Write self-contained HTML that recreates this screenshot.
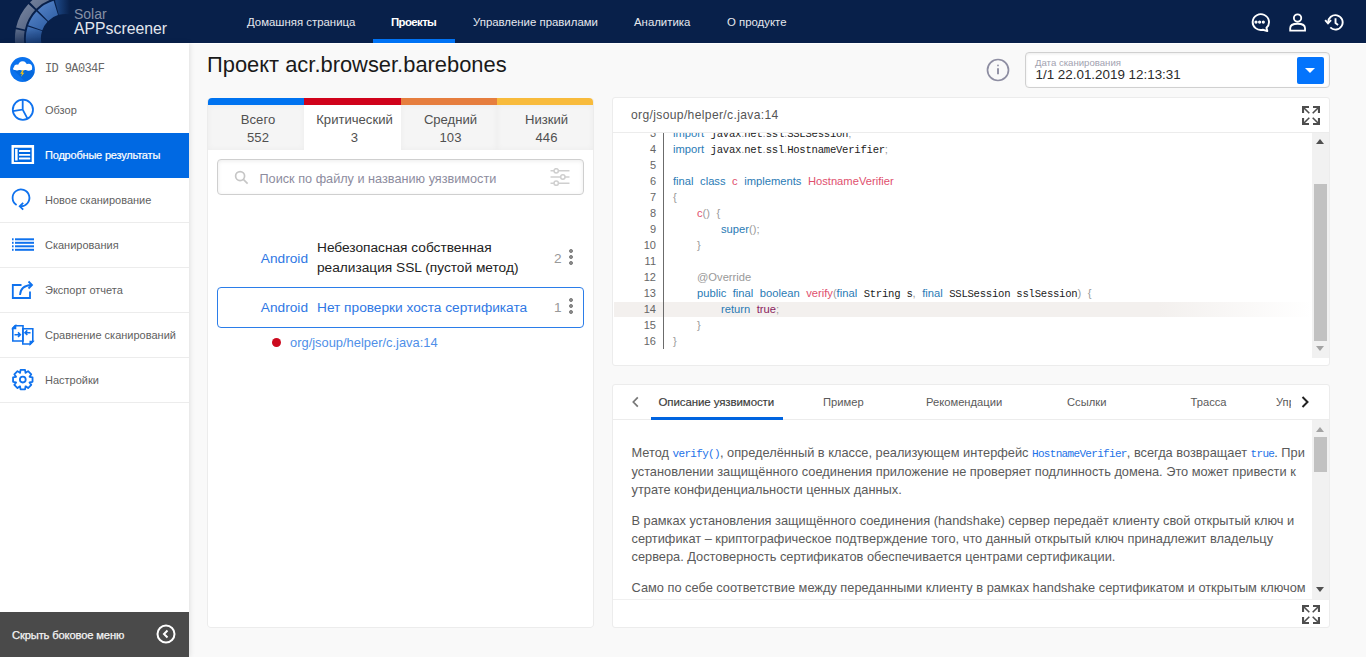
<!DOCTYPE html>
<html><head><meta charset="utf-8">
<style>
*{margin:0;padding:0;box-sizing:border-box}
html,body{width:1366px;height:657px;overflow:hidden;background:#f9f9f9;font-family:"Liberation Sans",sans-serif;position:relative}
.abs{position:absolute}
#hdr{left:0;top:0;width:1366px;height:43px;background:#08204a}
#hdr .nav{position:absolute;top:14px;font-size:11.4px;color:#e6e8ee;white-space:nowrap;line-height:16px}
#sb{left:0;top:43px;width:189px;height:614px;background:#fff;box-shadow:1px 0 5px rgba(0,0,0,.10)}
.si{position:absolute;left:0;width:189px;height:45px;border-bottom:1px solid #ececec}
.si .t{position:absolute;left:45px;top:0;line-height:44px;font-size:11px;color:#5f5f5f;white-space:nowrap}
.si svg{position:absolute}
.mono{font-family:"Liberation Mono",monospace}
.panel{background:#fff;border:1px solid #ececec;border-radius:3px}

.ttl{text-align:center;font-size:13.1px;line-height:18px;color:#505050}
.tab{box-shadow:inset 0 0 6px rgba(0,0,0,.04)}
.li{font-size:13.7px;line-height:20px;white-space:nowrap}
.dots{width:4px;height:18px;background:radial-gradient(circle,#888 1.8px,transparent 2.2px) 0 0/4px 6px repeat-y}

.cl{position:relative;height:16px;line-height:16px;white-space:nowrap;font-size:11.2px;word-spacing:3.4px}
.cl.hl{background:linear-gradient(90deg,#f3f0ee 0,#f3f0ee 78%,rgba(243,240,238,0) 100%) 0 1px/100% 16px no-repeat}
.ln{position:absolute;right:656px;width:40px;text-align:right;color:#666;font-size:11px;word-spacing:0}
.ct{position:absolute;left:59px}
.k{color:#2a7bb5}.f{color:#e0506e}.p{color:#9a9a9a}.an{color:#999}.tr{color:#8b1d5e}
.m{font-family:"Liberation Mono",monospace;font-size:10.6px;letter-spacing:-.25px;color:#1b1b1b;word-spacing:0}
.i1{display:inline-block;width:24px}.i2{display:inline-block;width:48px}
.tb{top:7.5px;font-size:11.2px;line-height:16px;color:#5a5a5a;white-space:nowrap}
.desc{font-size:12.8px;line-height:18px;color:#5a5a5a;white-space:nowrap}
.desc p{margin-bottom:13px}
.bm{font-family:"Liberation Mono",monospace;font-size:11px;color:#1d72e8;letter-spacing:-.68px}
</style></head>
<body>
<!-- HEADER -->
<div id="hdr" class="abs">
  <svg class="abs" style="left:0;top:0" width="72" height="43" viewBox="0 0 72 43">
  <defs>
    <linearGradient id="go" gradientUnits="userSpaceOnUse" x1="15" y1="0" x2="55" y2="43"><stop offset="0" stop-color="#7f8ca5"/><stop offset="1" stop-color="#34466a"/></linearGradient>
    <linearGradient id="gm" gradientUnits="userSpaceOnUse" x1="25" y1="5" x2="55" y2="43"><stop offset="0" stop-color="#5e8cd0"/><stop offset="1" stop-color="#1a4a90"/></linearGradient>
    <linearGradient id="fo" gradientUnits="userSpaceOnUse" x1="55" y1="0" x2="70" y2="0"><stop offset="0" stop-color="#4a5a78"/><stop offset="1" stop-color="#08204a"/></linearGradient>
    <linearGradient id="fm" gradientUnits="userSpaceOnUse" x1="55" y1="0" x2="70" y2="0"><stop offset="0" stop-color="#1e4a8a"/><stop offset="1" stop-color="#08204a"/></linearGradient>
    <linearGradient id="gb" gradientUnits="userSpaceOnUse" x1="0" y1="28" x2="0" y2="43"><stop offset="0" stop-color="#fff" stop-opacity="1"/><stop offset="1" stop-color="#fff" stop-opacity=".45"/></linearGradient>
    <mask id="mb"><rect x="0" y="0" width="72" height="43" fill="url(#gb)"/></mask>
  </defs>
  <g mask="url(#mb)">
  <path d="M15.76 29.32 A50 50 0 0 0 24.04 66.68 L31.41 61.52 A41 41 0 0 1 24.62 30.88 Z" fill="url(#go)"/>
  <path d="M27.70 26.60 A39 39 0 0 0 33.05 60.37 L45.34 51.77 A24 24 0 0 1 42.05 30.98 Z" fill="url(#gm)"/>
  </g>
  <path d="M28.43 3.90 A50 50 0 0 0 16.09 27.60 L24.90 29.48 A41 41 0 0 1 35.01 10.04 Z" fill="url(#go)"/>
  <path d="M51.22 -10.06 A50 50 0 0 0 29.95 2.34 L36.26 8.76 A41 41 0 0 1 53.70 -1.41 Z" fill="url(#go)"/>
  <path d="M90.00 -5.30 A50 50 0 0 0 52.90 -10.51 L55.08 -1.78 A41 41 0 0 1 85.50 2.49 Z" fill="url(#fo)"/>
  <path d="M36.48 11.40 A39 39 0 0 0 28.12 25.30 L42.31 30.19 A24 24 0 0 1 47.45 21.63 Z" fill="url(#gm)"/>
  <path d="M53.60 0.70 A39 39 0 0 0 37.66 10.18 L48.18 20.88 A24 24 0 0 1 57.98 15.05 Z" fill="url(#gm)"/>
  <path d="M90.07 8.12 A39 39 0 0 0 54.91 0.33 L58.79 14.82 A24 24 0 0 1 80.43 19.61 Z" fill="url(#fm)"/>
</svg>
  <div class="abs" style="left:74px;top:5px;font-size:14px;color:#8690a6;line-height:18px">Solar</div>
  <div class="abs" style="left:74px;top:19px;font-size:15.8px;color:#e2e6ee;line-height:20px">APPscreener</div>
  <div class="nav" style="left:247px">Домашняя страница</div>
  <div class="nav" style="left:391px;font-weight:bold;color:#fff;letter-spacing:-.6px">Проекты</div>
  <div class="abs" style="left:373px;top:39px;width:82px;height:4px;background:#0073f5"></div>
  <div class="nav" style="left:473px">Управление правилами</div>
  <div class="nav" style="left:634px">Аналитика</div>
  <div class="nav" style="left:727px">О продукте</div>
</div>
<div class="abs" style="left:0;top:43px;width:1366px;height:1px;background:#fff"></div>

<!-- SIDEBAR -->
<div id="sb" class="abs">
  <!-- ID -->
  <div class="si" style="top:0;border-bottom:none">
    <svg style="left:10px;top:14px" width="25" height="25" viewBox="0 0 25 25">
      <defs><clipPath id="cc"><circle cx="12.5" cy="12.5" r="12.4"/></clipPath></defs>
      <circle cx="12.5" cy="12.5" r="12.4" fill="#0a72ee"/>
      <path d="M3.5 13 L22 13 L34 25 L15.5 25 Z" fill="#0060d0" opacity=".55" clip-path="url(#cc)"/>
      <g fill="#fff">
        <circle cx="7" cy="10.6" r="3"/><circle cx="12.6" cy="8.9" r="4.6"/><circle cx="18.6" cy="10.2" r="3.5"/>
        <rect x="3.1" y="10.3" width="19" height="2.8" rx="1.3"/>
      </g>
      <path d="M12.6 13.1 L10.2 16.7 L12.1 16.7 L10.8 20 L14.4 15.7 L12.5 15.7 L13.8 13.1 Z" fill="#f6c412"/>
    </svg>
    <div class="t mono" style="line-height:52px;font-size:12px;color:#666;letter-spacing:-.62px">ID 9A034F</div>
  </div>
  <!-- Obzor -->
  <div class="si" style="top:45px;border-bottom:none">
    <svg style="left:11px;top:98px;top:10px" width="24" height="24" viewBox="0 0 24 24" fill="none" stroke="#0f72ee" stroke-width="1.8">
      <circle cx="11.9" cy="11.8" r="10.1"/>
      <path d="M11.7 1.7 V11.6 L1.8 13.1 M11.7 11.6 L16.6 20.8"/>
    </svg>
    <div class="t">Обзор</div>
  </div>
  <!-- active -->
  <div class="si" style="top:90px;height:45px;background:#0069e3;border-bottom:none">
    <svg style="left:11px;top:12px" width="24" height="20" viewBox="0 0 24 20" fill="#fff">
      <path fill-rule="evenodd" d="M0.5 0 H23.1 V19 H0.5 Z M2.9 2.7 V17 H20.7 V2.7 Z"/>
      <rect x="4.1" y="3.9" width="2.5" height="11.6"/>
      <rect x="8" y="5.1" width="11.2" height="1.8" rx=".5"/><rect x="8" y="8.9" width="11.2" height="1.8" rx=".5"/><rect x="8" y="12.6" width="11.2" height="1.8" rx=".5"/>
    </svg>
    <div class="t" style="color:#fff;font-size:11px;letter-spacing:-.2px;-webkit-text-stroke:.2px #fff">Подробные результаты</div>
  </div>
  <div class="si" style="top:135px;height:45px">
    <svg style="left:11px;top:9px" width="24" height="24" viewBox="0 0 24 24" fill="none" stroke="#0f72ee" stroke-width="1.8">
      <path d="M5.6 18 A8.4 8.4 0 1 1 9.2 19.2"/>
      <path d="M12.2 15.9 L8.7 19.3 L12.2 22.7"/>
    </svg>
    <div class="t">Новое сканирование</div>
  </div>
  <div class="si" style="top:180px;height:45px">
    <svg style="left:11px;top:15px" width="24" height="14" viewBox="0 0 24 14" fill="#0f72ee">
      <rect x="1" y="0.3" width="1.6" height="2"/><rect x="4" y="0.3" width="19" height="2"/>
      <rect x="1" y="3.8" width="1.6" height="2"/><rect x="4" y="3.8" width="19" height="2"/>
      <rect x="1" y="7.3" width="1.6" height="2"/><rect x="4" y="7.3" width="19" height="2"/>
      <rect x="1" y="10.8" width="1.6" height="2"/><rect x="4" y="10.8" width="19" height="2"/>
    </svg>
    <div class="t">Сканирования</div>
  </div>
  <div class="si" style="top:225px;height:45px">
    <svg style="left:11px;top:11px" width="24" height="22" viewBox="0 0 24 22" fill="none" stroke="#0f72ee" stroke-width="1.8">
      <path d="M10.5 6 H1.8 V19 H19 V12.5"/>
      <path d="M9 16 Q9.5 6.5 20.5 6"/>
      <path d="M17.5 2.5 L21 6 L17.5 9.5"/>
    </svg>
    <div class="t">Экспорт отчета</div>
  </div>
  <div class="si" style="top:270px;height:45px">
    <svg style="left:11px;top:11px" width="24" height="24" viewBox="0 0 24 24" fill="none" stroke="#0f72ee" stroke-width="1.6">
      <path d="M4 1.8 H12 V17 H1.8 V4 Z" fill="#0f72ee" fill-opacity="0" />
      <path d="M1.8 4.5 L4.5 1.8 V4.5 Z" fill="#0f72ee"/>
      <path d="M11.8 4.8 H21.8 V17.5 L19.3 20 H11.8 Z"/>
      <path d="M21.8 17.5 H19.3 V20 Z" fill="#0f72ee"/>
      <path d="M3.5 10.7 H9.3 M7 8.4 L9.3 10.7 L7 13"/>
      <path d="M19.5 8.7 H14 M16.3 6.4 L14 8.7 L16.3 11"/>
    </svg>
    <div class="t">Сравнение сканирований</div>
  </div>
  <div class="si" style="top:315px;height:45px">
    <svg style="left:11px;top:10px" width="24" height="24" viewBox="0 0 24 24" fill="none" stroke="#0f72ee" stroke-width="1.8" stroke-linejoin="round">
      <path d="M9.07 4.83 L9.55 1.86 L14.05 1.86 L14.53 4.83 L14.65 4.88 L17.10 3.12 L20.28 6.30 L18.52 8.75 L18.57 8.87 L21.54 9.35 L21.54 13.85 L18.57 14.33 L18.52 14.45 L20.28 16.90 L17.10 20.08 L14.65 18.32 L14.53 18.37 L14.05 21.34 L9.55 21.34 L9.07 18.37 L8.95 18.32 L6.50 20.08 L3.32 16.90 L5.08 14.45 L5.03 14.33 L2.06 13.85 L2.06 9.35 L5.03 8.87 L5.08 8.75 L3.32 6.30 L6.50 3.12 L8.95 4.88 Z"/>
      <circle cx="11.8" cy="11.6" r="2.9"/>
    </svg>
    <div class="t">Настройки</div>
  </div>
  <!-- bottom -->
  <div class="abs" style="left:0;top:569px;width:189px;height:45px;background:#4a4a4a">
    <div class="abs" style="left:12px;top:1px;line-height:45px;font-size:11.2px;color:#f4f4f4;letter-spacing:-.15px;-webkit-text-stroke:.25px #f4f4f4">Скрыть боковое меню</div>
    <svg class="abs" style="left:156px;top:12px" width="20" height="20" viewBox="0 0 20 20" fill="none" stroke="#fff" stroke-width="2">
      <circle cx="10" cy="10" r="8.5"/>
      <path d="M11.5 6.5 L8 10 L11.5 13.5"/>
    </svg>
  </div>
</div>


<!-- HEADER ICONS -->
<svg class="abs" style="left:1250px;top:12.5px" width="20" height="19" viewBox="0 0 21 20" fill="none" stroke="#fff" stroke-width="2">
  <path d="M17.3 15.6 A8.6 8.3 0 1 0 13.6 17.6 L18.2 19 Z" stroke-linejoin="round"/>
  <circle cx="6.3" cy="9.5" r=".7" fill="#fff"/><circle cx="10.1" cy="9.5" r=".7" fill="#fff"/><circle cx="14" cy="9.5" r=".7" fill="#fff"/>
</svg>
<svg class="abs" style="left:1289px;top:13px" width="17.5" height="19" viewBox="0 0 19 20" fill="none" stroke="#fff" stroke-width="2">
  <circle cx="9.3" cy="5.2" r="4"/>
  <path d="M1.3 18.9 V16.2 C1.3 12.6 5 11.4 9.3 11.4 C13.6 11.4 17.4 12.6 17.4 16.2 V18.9 Z"/>
</svg>
<svg class="abs" style="left:1323.5px;top:13px" width="20" height="19" viewBox="0 0 21 20" fill="none" stroke="#fff" stroke-width="2">
  <path d="M4.4 10.2 A7.6 7.6 0 1 1 6.6 15.2"/>
  <path d="M1.2 7.6 L4.2 11 L7.4 7.6"/>
  <path d="M12.1 5.6 V10.6 L14.8 12.6"/>
</svg>

<!-- TITLE -->
<div class="abs" style="left:207px;top:52px;font-size:21.9px;color:#1a1a1a;line-height:26px;white-space:nowrap">Проект acr.browser.barebones</div>

<!-- INFO + DATE -->
<svg class="abs" style="left:986px;top:58px" width="24" height="24" viewBox="0 0 24 24" fill="none" stroke="#8e8ea2" stroke-width="1.7">
  <circle cx="12" cy="12" r="10.5"/>
  <path d="M12 10.2 V16.3" stroke-width="1.9"/><circle cx="12" cy="7.4" r=".9" fill="#8e8ea2" stroke="none"/>
</svg>
<div class="abs" style="left:1025px;top:52px;width:305px;height:36px;background:#fff;border:1px solid #d0d0d0;border-radius:4px;box-shadow:inset 0 1px 3px rgba(0,0,0,.08)">
  <div class="abs" style="left:9px;top:3.5px;font-size:9.6px;color:#a2a2b0;line-height:12px;white-space:nowrap">Дата сканирования</div>
  <div class="abs" style="left:9.5px;top:13.5px;font-size:13.4px;color:#2a2a2a;line-height:16px;white-space:nowrap">1/1 22.01.2019 12:13:31</div>
  <div class="abs" style="left:271px;top:4px;width:27px;height:27px;background:#0474fc;border-radius:2px">
    <div class="abs" style="left:8px;top:11px;width:0;height:0;border-left:5.5px solid transparent;border-right:5.5px solid transparent;border-top:5px solid #fff"></div>
  </div>
</div>

<!-- LEFT PANEL -->
<div class="abs" style="left:208px;top:98px;width:385px;height:529px;background:#fff;border-radius:4px 4px 3px 3px;overflow:hidden;box-shadow:-1px 0 0 #ececec,1px 0 0 #ececec,0 1px 0 #ececec">
  <div class="abs" style="left:0;top:0;width:96px;height:7px;background:#0073f0"></div>
  <div class="abs" style="left:96px;top:0;width:97px;height:7px;background:#d0021b"></div>
  <div class="abs" style="left:193px;top:0;width:96px;height:7px;background:#e67e3e"></div>
  <div class="abs" style="left:289px;top:0;width:96px;height:7px;background:#f8bb3c"></div>
  <div class="abs tab" style="left:0;top:7px;width:96px;height:45px;background:#f5f5f5"></div>
  <div class="abs tab" style="left:193px;top:7px;width:96px;height:45px;background:#f5f5f5"></div>
  <div class="abs tab" style="left:289px;top:7px;width:96px;height:45px;background:#f5f5f5"></div>
  <div class="abs ttl" style="left:2px;top:13px;width:96px">Всего<br>552</div>
  <div class="abs ttl" style="left:98px;top:13px;width:97px">Критический<br>3</div>
  <div class="abs ttl" style="left:194.5px;top:13px;width:96px">Средний<br>103</div>
  <div class="abs ttl" style="left:290.5px;top:13px;width:96px">Низкий<br>446</div>
  <!-- search -->
  <div class="abs" style="left:9px;top:61px;width:367px;height:36px;border:1px solid #cfcfcf;border-radius:4px;box-shadow:inset 0 1px 4px rgba(0,0,0,.08)">
    <svg class="abs" style="left:15.5px;top:9.5px" width="15" height="15" viewBox="0 0 16 16" fill="none" stroke="#c6c6c6" stroke-width="1.8">
      <circle cx="6.5" cy="6.5" r="4.8"/><path d="M10 10 L14.5 14.5"/>
    </svg>
    <div class="abs" style="left:41.5px;top:11px;font-size:12.7px;color:#8d8c9e;line-height:16px;white-space:nowrap">Поиск по файлу и названию уязвимости</div>
    <svg class="abs" style="left:331px;top:7.5px" width="22" height="18" viewBox="0 0 22 19" fill="none" stroke="#cfcfcf" stroke-width="1.6">
      <path d="M1 3 H21 M1 9.5 H21 M1 16 H21"/>
      <circle cx="7" cy="3" r="2.3" fill="#fff"/><circle cx="14" cy="9.5" r="2.3" fill="#fff"/><circle cx="7" cy="16" r="2.3" fill="#fff"/>
    </svg>
  </div>
  <!-- items -->
  <div class="abs li" style="left:0;top:151px;width:100px;text-align:right;color:#2f78e4">Android</div>
  <div class="abs li" style="left:109px;top:140px;color:#222">Небезопасная собственная<br>реализация SSL (пустой метод)</div>
  <div class="abs li" style="left:346px;top:151px;color:#999">2</div>
  <div class="abs dots" style="left:361px;top:150px"></div>
  <div class="abs" style="left:9px;top:188.5px;width:367px;height:41px;border:1px solid #2b7de9;border-radius:4px"></div>
  <div class="abs li" style="left:0;top:200px;width:100px;text-align:right;color:#2f78e4">Android</div>
  <div class="abs li" style="left:109px;top:200px;color:#2f78e4">Нет проверки хоста сертификата</div>
  <div class="abs li" style="left:346px;top:200px;color:#999">1</div>
  <div class="abs dots" style="left:361px;top:199px"></div>
  <div class="abs" style="left:64px;top:240px;width:9px;height:9px;border-radius:50%;background:#cc0a1e"></div>
  <div class="abs li" style="left:82px;top:235px;color:#4f8fe8;font-size:12.9px">org/jsoup/helper/c.java:14</div>
</div>

<!-- CODE PANEL -->
<div class="abs panel" style="left:612px;top:97px;width:718px;height:269px"><div class="abs" style="left:1px;top:1px;width:0;height:0">
  <div class="abs" style="left:17px;top:8px;font-size:12.1px;color:#555;line-height:16px;letter-spacing:.35px">org/jsoup/helper/c.java:14</div>
  <svg class="abs" style="left:688px;top:7px" width="18" height="19" viewBox="0 0 18 19" fill="none" stroke="#4d4d4d" stroke-linecap="butt" stroke-linejoin="miter">
    <path d="M1 7 V1 H7 M11 1 H17 V7 M1 12 V18 H7 M17 12 V18 H11" stroke-width="2.2"/>
    <path d="M2 2 L7.3 7.3 M16 2 L10.7 7.3 M2 17 L7.3 11.7 M16 17 L10.7 11.7" stroke-width="1.6"/>
  </svg>
  <div class="abs" style="left:-1px;top:33px;width:716px;height:1px;background:#ececec"></div>
  <div class="abs" style="left:0;top:34px;width:698px;height:225px;overflow:hidden">
    <div class="abs" style="left:0;top:-8px;width:698px">
<div class="cl"><span class="ln">3</span><span class="ct"><span class="k">import</span> <span class="m">javax</span><span class="p">.</span><span class="m">net</span><span class="p">.</span><span class="m">ssl</span><span class="p">.</span><span class="m">SSLSession</span><span class="p">;</span></span></div>
<div class="cl"><span class="ln">4</span><span class="ct"><span class="k">import</span> <span class="m">javax</span><span class="p">.</span><span class="m">net</span><span class="p">.</span><span class="m">ssl</span><span class="p">.</span><span class="m">HostnameVerifier</span><span class="p">;</span></span></div>
<div class="cl"><span class="ln">5</span><span class="ct"></span></div>
<div class="cl"><span class="ln">6</span><span class="ct"><span class="k">final</span> <span class="k">class</span> <span class="f">c</span> <span class="k">implements</span> <span class="f">HostnameVerifier</span></span></div>
<div class="cl"><span class="ln">7</span><span class="ct"><span class="p">{</span></span></div>
<div class="cl"><span class="ln">8</span><span class="ct"><span class="i1"></span><span class="f">c</span><span class="p">()</span> <span class="p">{</span></span></div>
<div class="cl"><span class="ln">9</span><span class="ct"><span class="i2"></span><span class="k">super</span><span class="p">();</span></span></div>
<div class="cl"><span class="ln">10</span><span class="ct"><span class="i1"></span><span class="p">}</span></span></div>
<div class="cl"><span class="ln">11</span><span class="ct"></span></div>
<div class="cl"><span class="ln">12</span><span class="ct"><span class="i1"></span><span class="an">@Override</span></span></div>
<div class="cl"><span class="ln">13</span><span class="ct"><span class="i1"></span><span class="k">public</span> <span class="k">final</span> <span class="k">boolean</span> <span class="f">verify</span><span class="p">(</span><span class="k">final</span> <span class="m">String s</span><span class="p">,</span> <span class="k">final</span> <span class="m">SSLSession sslSession</span><span class="p">)</span> <span class="p">{</span></span></div>
<div class="cl hl"><span class="ln">14</span><span class="ct"><span class="i2"></span><span class="k">return</span> <span class="tr">true</span><span class="p">;</span></span></div>
<div class="cl"><span class="ln">15</span><span class="ct"><span class="i1"></span><span class="p">}</span></span></div>
<div class="cl"><span class="ln">16</span><span class="ct"><span class="p">}</span></span></div>

    </div>
    <div class="abs" style="left:49px;top:0;width:1px;height:216px;background:#6b6b6b"></div>
  </div>
  <!-- scrollbar -->
  <div class="abs" style="left:698px;top:34px;width:17px;height:225px;background:#f1f1f1">
    <div class="abs" style="left:4px;top:6px;width:0;height:0;border-left:4.5px solid transparent;border-right:4.5px solid transparent;border-bottom:5px solid #505050"></div>
    <div class="abs" style="left:2px;top:51px;width:13px;height:157px;background:#c1c1c1"></div>
    <div class="abs" style="left:4px;top:213px;width:0;height:0;border-left:4.5px solid transparent;border-right:4.5px solid transparent;border-top:5px solid #a3a3a3"></div>
  </div>
</div></div>

<!-- DESC PANEL -->
<div class="abs panel" style="left:612px;top:384px;width:718px;height:244px"><div class="abs" style="left:1px;top:1px;width:0;height:0">
  <div class="abs" style="left:-1px;top:33px;width:716px;height:1px;background:#ececec"></div>
  <svg class="abs" style="left:17px;top:10px" width="10" height="12" viewBox="0 0 10 12" fill="none" stroke="#777" stroke-width="1.7"><path d="M6.8 1.3 L2.3 6 L6.8 10.7"/></svg>
  <div class="abs tb" style="left:44.5px;color:#3a3a3a;font-size:11.5px;letter-spacing:-.1px;-webkit-text-stroke:.15px #3a3a3a">Описание уязвимости</div>
  <div class="abs" style="left:37px;top:31px;width:132px;height:3px;background:#0064e0"></div>
  <div class="abs tb" style="left:209px">Пример</div>
  <div class="abs tb" style="left:312px">Рекомендации</div>
  <div class="abs tb" style="left:453px">Ссылки</div>
  <div class="abs tb" style="left:576.5px">Трасса</div>
  <div class="abs" style="left:662px;top:0;width:15px;height:33px;overflow:hidden"><div class="abs tb" style="left:0">Управление</div></div>
  <svg class="abs" style="left:686px;top:9px" width="10" height="14" viewBox="0 0 10 14" fill="none" stroke="#222" stroke-width="2"><path d="M2.5 2 L7.5 7 L2.5 12"/></svg>
  <div class="abs" style="left:0;top:34px;width:698px;height:179px;overflow:hidden">
    <div class="abs desc" style="left:17.5px;top:24px">
      <p>Метод <span class="bm">verify()</span>, определённый в классе, реализующем интерфейс <span class="bm">HostnameVerifier</span>, всегда возвращает <span class="bm">true</span>. При<br>установлении защищённого соединения приложение не проверяет подлинность домена. Это может привести к<br>утрате конфиденциальности ценных данных.</p>
      <p>В рамках установления защищённого соединения (handshake) сервер передаёт клиенту свой открытый ключ и<br>сертификат – криптографическое подтверждение того, что данный открытый ключ принадлежит владельцу<br>сервера. Достоверность сертификатов обеспечивается центрами сертификации.</p>
      <p>Само по себе соответствие между переданными клиенту в рамках handshake сертификатом и открытым ключом<br>ещё не гарантирует подлинность сервера.</p>
    </div>
  </div>
  <div class="abs" style="left:698px;top:34px;width:17px;height:179px;background:#f1f1f1">
    <div class="abs" style="left:4px;top:7px;width:0;height:0;border-left:4.5px solid transparent;border-right:4.5px solid transparent;border-bottom:5px solid #a3a3a3"></div>
    <div class="abs" style="left:2px;top:17px;width:13px;height:35px;background:#c1c1c1"></div>
    <div class="abs" style="left:4px;top:167px;width:0;height:0;border-left:4.5px solid transparent;border-right:4.5px solid transparent;border-top:5px solid #505050"></div>
  </div>
  <div class="abs" style="left:-1px;top:213px;width:716px;height:1px;background:#f0f0f0"></div>
  <svg class="abs" style="left:688px;top:219px" width="18" height="19" viewBox="0 0 18 19" fill="none" stroke="#4d4d4d" stroke-linecap="butt" stroke-linejoin="miter">
    <path d="M1 7 V1 H7 M11 1 H17 V7 M1 12 V18 H7 M17 12 V18 H11" stroke-width="2.2"/>
    <path d="M2 2 L7.3 7.3 M16 2 L10.7 7.3 M2 17 L7.3 11.7 M16 17 L10.7 11.7" stroke-width="1.6"/>
  </svg>
</div></div>
</body></html>
